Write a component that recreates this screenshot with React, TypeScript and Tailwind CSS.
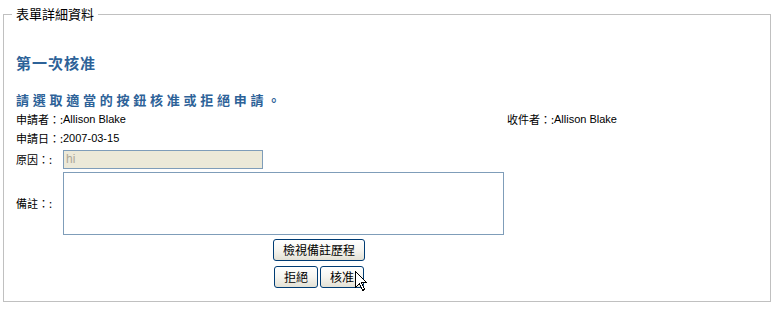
const cjk = { fontFamily: '"Noto Sans CJK TC", "Liberation Sans", sans-serif' };
const latin = { fontFamily: '"Liberation Sans", sans-serif' };

function XpButton({ children, className = "" }: { children: React.ReactNode; className?: string }) {
  return (
    <button
      className={
        "h-[22px] rounded-[3px] border border-[#003c74] bg-gradient-to-b from-white via-[#f6f5f0] to-[#e3e1d5] text-[12px] leading-none text-black " +
        className
      }
    >
      {children}
    </button>
  );
}

export default function App() {
  return (
    <div className="h-[309px] w-[778px] bg-white text-black" style={cjk}>
      <fieldset className="relative ml-[3px] mr-[7px] mt-[6px] h-[296px] border border-[#c0c0c0] pl-[12px]">
        <legend className="ml-[-4px] px-[4px] text-[13px] leading-[16px]">表單詳細資料</legend>

        <h2 className="mt-[32px] text-[15px] font-bold leading-[18px] tracking-[1px] text-[#2d6298]">第一次核准</h2>

        <p className="mt-[20px] text-[13px] font-bold leading-[16px] tracking-[3.75px] text-[#2d6298]">
          請選取適當的按鈕核准或拒絕申請。
        </p>

        <div className="mt-[2px] grid w-[606px] grid-cols-[47px_444px_47px_68px] text-[11px]">
          <div className="flex h-[19px] items-center whitespace-nowrap">申請者：:</div>
          <div className="flex h-[19px] items-center" style={latin}>
            Allison Blake
          </div>
          <div className="flex h-[19px] items-center whitespace-nowrap">收件者：:</div>
          <div className="flex h-[19px] items-center whitespace-nowrap" style={latin}>
            Allison Blake
          </div>

          <div className="flex h-[19px] items-center whitespace-nowrap">申請日：:</div>
          <div className="col-span-3 flex h-[19px] items-center" style={latin}>
            2007-03-15
          </div>

          <div className="flex h-[22px] items-center whitespace-nowrap">原因：:</div>
          <div className="col-span-3 flex h-[22px] items-center">
            <input
              disabled
              value="hi"
              readOnly
              className="h-[19px] w-[200px] border border-[#7f9db9] bg-[#ece9d8] px-[2px] text-[12px] text-[#aca899]"
              style={latin}
            />
          </div>

          <div className="flex h-[66px] items-center whitespace-nowrap">備註：:</div>
          <div className="col-span-3 flex h-[66px] items-center">
            <textarea className="h-[63px] w-[441px] resize-none border border-[#7f9db9] bg-white" />
          </div>
        </div>

        <div className="flex w-[606px] flex-col items-center gap-[5px] pt-[3px]">
          <XpButton className="w-[92px]">檢視備註歷程</XpButton>
          <div className="flex gap-[2px]">
            <XpButton className="w-[44px]">拒絕</XpButton>
            <XpButton className="w-[44px]">核准</XpButton>
          </div>
        </div>

        <svg
          className="absolute left-[351px] top-[249px]"
          width="13"
          height="21"
          viewBox="0 0 13 21"
          shapeRendering="crispEdges"
        >
          <path d="M0.5 0.5 L0.5 16.5 L4.5 12.5 L7.5 19.5 L9.5 18.5 L6.5 11.5 L11.5 11.5 Z" fill="white" stroke="black" strokeWidth="1" />
        </svg>
      </fieldset>
    </div>
  );
}
